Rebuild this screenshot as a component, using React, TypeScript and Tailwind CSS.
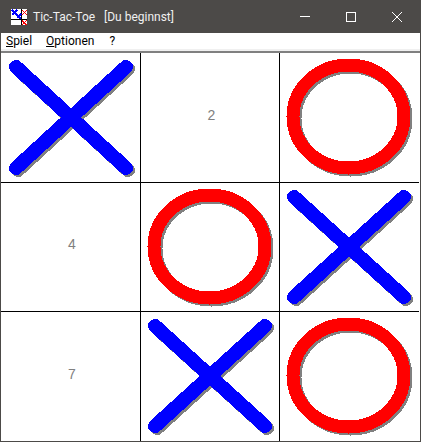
const BLUE = '#0000ff';
const RED = '#ff0000';
const SHADOW = '#808080';

// dx / grow: the first column and first row are one pixel bigger than the others
const Cross = ({ dx = 0, grow = 0 }: { dx?: number; grow?: number }) => {
  const d = `M${14 + dx} 14 L${124 + dx} ${114 + grow} M${124 + dx} 14 L${14 + dx} ${114 + grow}`;
  return (
    <svg width="138" height="128" viewBox="0 0 138 128" fill="none" shapeRendering="crispEdges" className="shrink-0">
      <path d={d} stroke={SHADOW} strokeWidth="14" strokeLinecap="round" transform="translate(2 2)" />
      <path d={d} stroke={BLUE} strokeWidth="14" strokeLinecap="round" />
    </svg>
  );
};

const Circle = () => (
  <svg width="138" height="128" viewBox="0 0 138 128" fill="none" shapeRendering="crispEdges" className="shrink-0">
    <ellipse cx="70.5" cy="65.5" rx="55.5" ry="51.5" stroke={SHADOW} strokeWidth="13" />
    <ellipse cx="68.5" cy="63.5" rx="55.5" ry="51.5" stroke={RED} strokeWidth="13" />
  </svg>
);

const AppIcon = () => (
  <svg width="16" height="16" viewBox="0 0 16 16" shapeRendering="crispEdges" className="shrink-0">
    <rect width="16" height="16" fill="#ffffff" />
    <rect x="10" y="0" width="1" height="16" fill="#000000" />
    <rect x="0" y="10" width="16" height="1" fill="#000000" />
    <path d="M1 1 L6 6 M6 1 L1 6" stroke={BLUE} strokeWidth="1.6" />
    <path d="M6 6 L10 10 M10 5 L6 9" stroke={BLUE} strokeWidth="1.6" />
    <path d="M11 1 L16 6 M16 1 L11 6" stroke={RED} strokeWidth="1.4" />
    <path d="M11 11 L16 16 M16 11 L11 16" stroke={RED} strokeWidth="1.4" />
  </svg>
);

const Num = ({ n }: { n: string }) => (
  <div className="w-full h-full flex items-center justify-center pl-[3px] pb-[6px]">
    <span className="text-[14px] leading-none text-[#808080] font-['Liberation_Sans',sans-serif]">{n}</span>
  </div>
);

export default function App() {
  const cellCls = 'overflow-hidden border-black';
  return (
    <div className="w-[421px] h-[442px] flex flex-col overflow-hidden bg-white border border-t-0 border-[#4c4a48] font-['Roboto','Liberation_Sans',sans-serif]">
      {/* Title bar */}
      <div className="h-[33px] shrink-0 flex items-center bg-[#4c4a48] text-white -mx-px">
        <div className="ml-[11px] mr-[6px]">
          <AppIcon />
        </div>
        <span className="text-[12px] leading-none whitespace-pre text-[#f0f0f0]">Tic-Tac-Toe   [Du beginnst]</span>
        <div className="ml-auto flex items-center h-full">
          <div className="w-[46px] flex justify-center">
            <div className="w-[10px] h-px bg-white" />
          </div>
          <div className="w-[46px] flex justify-center">
            <div className="w-[10px] h-[10px] border border-white" />
          </div>
          <div className="w-[46px] flex justify-center mr-[1px]">
            <svg width="10" height="10" viewBox="0 0 10 10" stroke="#ffffff" strokeWidth="1">
              <path d="M0 0 L10 10 M10 0 L0 10" />
            </svg>
          </div>
        </div>
      </div>

      {/* Menu */}
      <div className="h-[16px] shrink-0 flex items-center gap-[14px] pl-[5px] text-[12px] leading-none text-black">
        <span><u>S</u>piel</span>
        <span><u>O</u>ptionen</span>
        <span className="ml-[1px]">?</span>
      </div>
      <div className="h-[2px] shrink-0 bg-[#f0f0f0]" />
      <div className="h-[2px] shrink-0 bg-[#808080]" />

      {/* Board */}
      <div className="grid grid-cols-[140px_139px_139px] grid-rows-[130px_129px_129px]">
        <div className={`${cellCls} border-r border-b`}><Cross dx={1} grow={1} /></div>
        <div className={`${cellCls} border-r border-b`}><Num n="2" /></div>
        <div className={`${cellCls} border-b`}><Circle /></div>
        <div className={`${cellCls} border-r border-b`}><Num n="4" /></div>
        <div className={`${cellCls} border-r border-b`}><Circle /></div>
        <div className={`${cellCls} border-b`}><Cross /></div>
        <div className={`${cellCls} border-r`}><Num n="7" /></div>
        <div className={`${cellCls} border-r`}><Cross /></div>
        <div className={cellCls}><Circle /></div>
      </div>
    </div>
  );
}
